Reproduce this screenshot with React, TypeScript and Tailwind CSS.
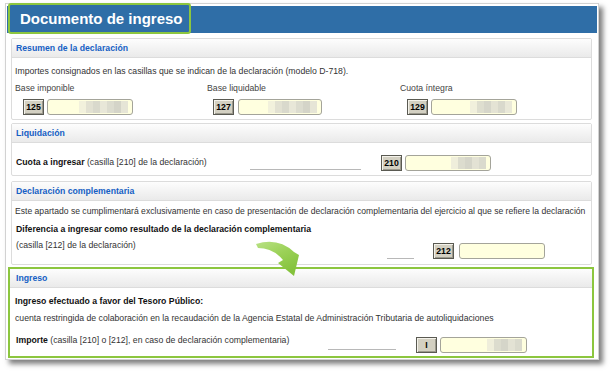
import React from "react";

const blurA = ["bg-[#f2f1dc]", "bg-[#e2e1d2]", "bg-[#d9d9cc]", "bg-[#e8e7d8]", "bg-[#dcdccf]", "bg-[#d4d4c8]", "bg-[#e6e5d6]"];
const blurB = ["bg-[#f1f0dc]", "bg-[#dedecf]", "bg-[#d6d6ca]", "bg-[#e4e3d4]", "bg-[#d9d9cc]", "bg-[#e9e8d8]"];
const blurC = ["bg-[#efeedb]", "bg-[#dcdcce]", "bg-[#d5d5c9]", "bg-[#e3e2d4]", "bg-[#dadacd]"];

function Field({ blur, w = "w-[86px]" }: { blur?: string[]; w?: string }) {
  return (
    <div
      className={`${w} h-[16px] rounded-[3px] border border-[#a4a49a] bg-[#ffffdf] flex justify-end items-stretch py-[1px] pr-[4px] overflow-hidden`}
    >
      {blur?.map((c, i) => (
        <div key={i} className={`${c} w-[7px]`} />
      ))}
    </div>
  );
}

function Box({ n }: { n: string }) {
  return (
    <div className="w-[21px] h-[16px] shrink-0 bg-[#d3d0c2] border border-[#5a5a52] shadow-[inset_1px_1px_0_#f4f2ea,inset_-1px_-1px_0_#9c9a8e] flex items-center justify-center text-[8.7px] font-bold text-black leading-none">
      {n}
    </div>
  );
}

function Header({ title, px = "px-[4px]" }: { title: string; px?: string }) {
  return (
    <div
      className={`h-[19px] border-b border-[#dcdcdc] bg-gradient-to-b from-[#fdfdfd] to-[#eaeaea] ${px} flex items-center text-[8.7px] font-bold text-[#1560c4] leading-[11px]`}
    >
      {title}
    </div>
  );
}

export default function App() {
  return (
    <div className="relative w-[612px] h-[374px] bg-white pl-[5px] pt-[3px] font-['Liberation_Sans',Arial,sans-serif] text-[8.7px] leading-[11px] text-[#333]">
      <div className="w-[594px] h-[357px] border border-[#d2d2d2] bg-white shadow-[4px_4px_5px_rgba(0,0,0,0.5)] flex flex-col">
        {/* Blue title bar */}
        <div className="mt-[2px] mx-[1px] h-[27px] shrink-0 bg-[#2f6ea7] flex items-start">
          <div className="ml-[1px] -mt-[3px] h-[31px] w-[183px] border-2 border-[#8cc63f] rounded-[3px] bg-[#2f6ea7] flex items-center pl-[10px] text-white font-bold text-[15px] leading-none">
            Documento de ingreso
          </div>
        </div>

        {/* Resumen */}
        <div className="mt-[5px] ml-[5px] w-[581px] h-[82px] shrink-0 border border-[#dcdcdc] rounded-[2px] flex flex-col">
          <Header title="Resumen de la declaración" />
          <div className="px-[3px] pt-[8px]">
            <div>Importes consignados en las casillas que se indican de la declaración (modelo D-718).</div>
            <div className="mt-[6px] grid grid-cols-[192px_193px_1fr] text-[#444]">
              <div>
                <div>Base imponible</div>
                <div className="mt-[5px] ml-[8px] flex gap-[3px]">
                  <Box n="125" />
                  <Field blur={blurA} />
                </div>
              </div>
              <div>
                <div>Base liquidable</div>
                <div className="mt-[5px] ml-[6px] flex gap-[4px]">
                  <Box n="127" />
                  <Field blur={blurA} w="w-[84px]" />
                </div>
              </div>
              <div>
                <div>Cuota íntegra</div>
                <div className="mt-[5px] ml-[7px] flex gap-[3px]">
                  <Box n="129" />
                  <Field blur={blurB} />
                </div>
              </div>
            </div>
          </div>
        </div>

        {/* Liquidación */}
        <div className="mt-[3px] ml-[5px] w-[581px] h-[53px] shrink-0 border border-[#dcdcdc] rounded-[2px] flex flex-col">
          <Header title="Liquidación" />
          <div className="px-[4px] pt-[12px] flex items-start">
            <div className="w-[234px] mt-[2px]">
              <span className="font-bold text-[#111]">Cuota a ingresar</span> (casilla [210] de la declaración)
            </div>
            <div className="w-[111px] h-[15px] border-b border-[#b8b8b8]" />
            <div className="ml-[20px]">
              <Box n="210" />
            </div>
            <div className="ml-[3px]">
              <Field blur={blurC} />
            </div>
          </div>
        </div>

        {/* Declaración complementaria */}
        <div className="mt-[5px] ml-[5px] w-[581px] h-[84px] shrink-0 border border-[#dcdcdc] rounded-[2px] flex flex-col">
          <Header title="Declaración complementaria" />
          <div className="px-[3px] pt-[5px]">
            <div className="whitespace-nowrap text-[8.6px]">
              Este apartado se cumplimentará exclusivamente en caso de presentación de declaración complementaria del ejercicio al que se refiere la declaración
            </div>
            <div className="mt-[7px] ml-[1px] font-bold text-[#111]">
              Diferencia a ingresar como resultado de la declaración complementaria
            </div>
            <div className="mt-[5px] ml-[1px] flex items-start">
              <div className="w-[371px]">(casilla [212] de la declaración)</div>
              <div className="w-[27px] h-[19px] border-b border-[#b8b8b8]" />
              <div className="ml-[19px] mt-[3px]">
                <Box n="212" />
              </div>
              <div className="ml-[5px] mt-[3px]">
                <Field />
              </div>
            </div>
          </div>
        </div>

        {/* Ingreso */}
        <div className="mt-[2px] ml-[2px] w-[586px] h-[91px] shrink-0 border-2 border-[#8cc63f] flex flex-col">
          <Header title="Ingreso" px="px-[6px]" />
          <div className="px-[5px] pt-[8px]">
            <div className="font-bold text-[#111]">Ingreso efectuado a favor del Tesoro Público:</div>
            <div className="mt-[6px]">
              cuenta restringida de colaboración en la recaudación de la Agencia Estatal de Administración Tributaria de autoliquidaciones
            </div>
            <div className="mt-[11px] ml-[1px] flex items-start">
              <div className="w-[312px]">
                <span className="font-bold text-[#111]">Importe</span> (casilla [210] o [212], en caso de declaración complementaria)
              </div>
              <div className="w-[68px] h-[15px] border-b border-[#b8b8b8]" />
              <div className="ml-[20px] mt-[2px]">
                <Box n="I" />
              </div>
              <div className="ml-[3px] mt-[2px]">
                <Field blur={blurC} w="w-[87px]" />
              </div>
            </div>
          </div>
        </div>
      </div>

      {/* Green curved arrow annotation */}
      <svg className="absolute left-[251px] top-[238px]" width="55" height="42" viewBox="0 0 55 42">
        <defs>
          <linearGradient id="ag" x1="0" y1="0" x2="0.6" y2="1">
            <stop offset="0" stopColor="#b9e184" />
            <stop offset="0.5" stopColor="#9bd157" />
            <stop offset="1" stopColor="#84c23c" />
          </linearGradient>
        </defs>
        <path d="M5 6 Q27 -1 43 14 L48 17 L43 38 L27 25 L32 22 Q22 10 7 10 Z" fill="url(#ag)" />
      </svg>
    </div>
  );
}
